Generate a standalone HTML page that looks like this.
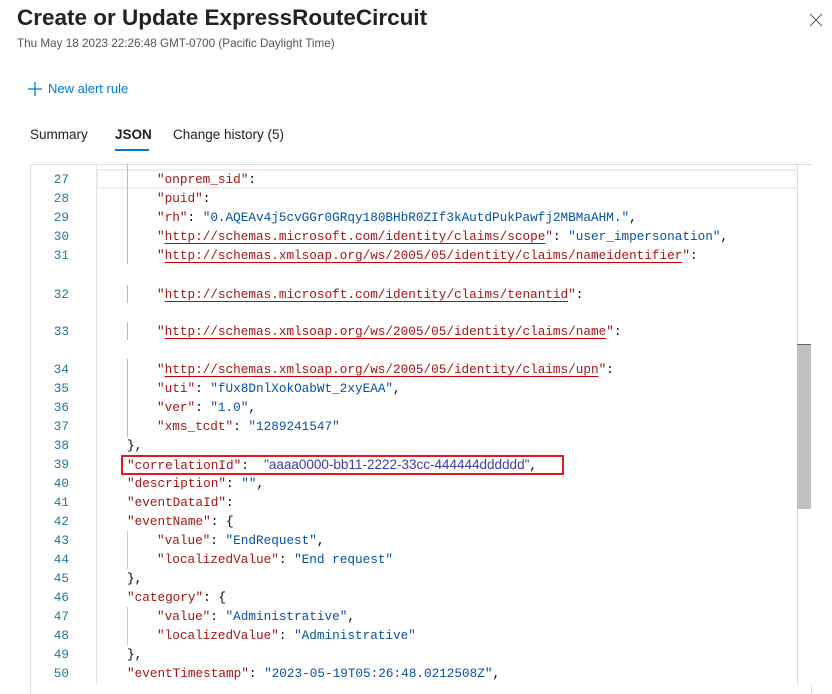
<!DOCTYPE html>
<html><head><style>
body{margin:0;width:832px;height:684px;background:#fff;position:relative;overflow:hidden;font-family:"Liberation Sans",sans-serif}
.a{position:absolute;white-space:pre}
.m{font-family:"Liberation Mono",monospace;font-size:12.7px;line-height:19px}
.ln{color:#237893;width:40px;text-align:right;left:29px}
.k{color:#a31515}.s{color:#0451a5}.p{color:#000}
.u{text-decoration:underline;text-decoration-color:#c00;text-underline-offset:3px}
.g{position:absolute;width:1px;background:#c8c8c8}
</style></head><body>
<div class="a" style="left:17px;top:5px;font-size:22.5px;color:#222;font-weight:600">Create or Update ExpressRouteCircuit</div>
<div class="a" style="left:17px;top:37px;font-size:11.7px;color:#555">Thu May 18 2023 22:26:48 GMT-0700 (Pacific Daylight Time)</div>
<svg class="a" style="left:808px;top:12px" width="16" height="16"><path d="M2 2L14 14M14 2L2 14" stroke="#555" stroke-width="1"/></svg>
<svg class="a" style="left:27px;top:81px" width="16" height="16"><path d="M8 1V15M1 8H15" stroke="#0078d4" stroke-width="1.3"/></svg>
<div class="a" style="left:48px;top:81px;font-size:13px;color:#0078d4">New alert rule</div>
<div class="a" style="left:30px;top:127px;font-size:13.5px;color:#222">Summary</div>
<div class="a" style="left:115px;top:127px;font-size:13.5px;color:#222;font-weight:600">JSON</div>
<div style="position:absolute;left:115px;top:149px;width:34px;height:2px;background:#0078d4"></div>
<div class="a" style="left:173px;top:127px;font-size:13.5px;color:#222">Change history (5)</div>

<div style="position:absolute;left:30px;top:164px;width:782px;height:530px;border:1px solid #ddd;border-bottom:none;box-sizing:border-box"></div>
<div style="position:absolute;left:96px;top:169px;width:715px;height:20px;border:2px solid #eee;box-sizing:border-box"></div>
<div class="g" style="left:96px;top:164px;height:520px;background:#e4e4e4"></div>
<div class="g" style="left:127px;top:164px;height:100px;background:#bbb"></div>
<div class="g" style="left:127px;top:285px;height:18px;background:#bbb"></div>
<div class="g" style="left:127px;top:322px;height:18px;background:#bbb"></div>
<div class="g" style="left:127px;top:359px;height:78px;background:#bbb"></div>
<div class="g" style="left:127px;top:531px;height:38px"></div>
<div class="g" style="left:127px;top:607px;height:38px"></div>
<div style="position:absolute;left:797px;top:165px;width:14px;height:520px;border-left:1px solid #ddd;background:#fff"></div>
<div style="position:absolute;left:797px;top:344px;width:14px;height:164px;background:#c1c1c1;border-top:1px solid #666"></div>

<div class="a m ln" style="top:170px">27</div><div class="a m" style="left:157px;top:170px"><span class="k">"onprem_sid"</span>:</div>
<div class="a m ln" style="top:189px">28</div><div class="a m" style="left:157px;top:189px"><span class="k">"puid"</span>:</div>
<div class="a m ln" style="top:208px">29</div><div class="a m" style="left:157px;top:208px"><span class="k">"rh"</span>: <span class="s">"0.AQEAv4j5cvGGr0GRqy180BHbR0ZIf3kAutdPukPawfj2MBMaAHM."</span>,</div>
<div class="a m ln" style="top:227px">30</div><div class="a m" style="left:157px;top:227px"><span class="k">"<span class="u">http://schemas.microsoft.com/identity/claims/scope</span>"</span>: <span class="s">"user_impersonation"</span>,</div>
<div class="a m ln" style="top:246px">31</div><div class="a m" style="left:157px;top:246px"><span class="k">"<span class="u">http://schemas.xmlsoap.org/ws/2005/05/identity/claims/nameidentifier</span>"</span>:</div>
<div class="a m ln" style="top:285px">32</div><div class="a m" style="left:157px;top:285px"><span class="k">"<span class="u">http://schemas.microsoft.com/identity/claims/tenantid</span>"</span>:</div>
<div class="a m ln" style="top:322px">33</div><div class="a m" style="left:157px;top:322px"><span class="k">"<span class="u">http://schemas.xmlsoap.org/ws/2005/05/identity/claims/name</span>"</span>:</div>
<div class="a m ln" style="top:360px">34</div><div class="a m" style="left:157px;top:360px"><span class="k">"<span class="u">http://schemas.xmlsoap.org/ws/2005/05/identity/claims/upn</span>"</span>:</div>
<div class="a m ln" style="top:379px">35</div><div class="a m" style="left:157px;top:379px"><span class="k">"uti"</span>: <span class="s">"fUx8DnlXokOabWt_2xyEAA"</span>,</div>
<div class="a m ln" style="top:398px">36</div><div class="a m" style="left:157px;top:398px"><span class="k">"ver"</span>: <span class="s">"1.0"</span>,</div>
<div class="a m ln" style="top:417px">37</div><div class="a m" style="left:157px;top:417px"><span class="k">"xms_tcdt"</span>: <span class="s">"1289241547"</span></div>
<div class="a m ln" style="top:436px">38</div><div class="a m" style="left:127px;top:436px">},</div>
<div class="a m ln" style="top:455px">39</div><div class="a m" style="left:127px;top:455px"><span class="k">"correlationId"</span>:  <span style="font-family:'Liberation Sans',sans-serif;font-size:13.5px;color:#3b3ba8">"aaaa0000-bb11-2222-33cc-444444dddddd"</span>,</div>
<div style="position:absolute;left:121px;top:455px;width:443px;height:20px;border:2px solid #e8171e;box-sizing:border-box"></div>
<div class="a m ln" style="top:474px">40</div><div class="a m" style="left:127px;top:474px"><span class="k">"description"</span>: <span class="s">""</span>,</div>
<div class="a m ln" style="top:493px">41</div><div class="a m" style="left:127px;top:493px"><span class="k">"eventDataId"</span>:</div>
<div class="a m ln" style="top:512px">42</div><div class="a m" style="left:127px;top:512px"><span class="k">"eventName"</span>: {</div>
<div class="a m ln" style="top:531px">43</div><div class="a m" style="left:157px;top:531px"><span class="k">"value"</span>: <span class="s">"EndRequest"</span>,</div>
<div class="a m ln" style="top:550px">44</div><div class="a m" style="left:157px;top:550px"><span class="k">"localizedValue"</span>: <span class="s">"End request"</span></div>
<div class="a m ln" style="top:569px">45</div><div class="a m" style="left:127px;top:569px">},</div>
<div class="a m ln" style="top:588px">46</div><div class="a m" style="left:127px;top:588px"><span class="k">"category"</span>: {</div>
<div class="a m ln" style="top:607px">47</div><div class="a m" style="left:157px;top:607px"><span class="k">"value"</span>: <span class="s">"Administrative"</span>,</div>
<div class="a m ln" style="top:626px">48</div><div class="a m" style="left:157px;top:626px"><span class="k">"localizedValue"</span>: <span class="s">"Administrative"</span></div>
<div class="a m ln" style="top:645px">49</div><div class="a m" style="left:127px;top:645px">},</div>
<div class="a m ln" style="top:664px">50</div><div class="a m" style="left:127px;top:664px"><span class="k">"eventTimestamp"</span>: <span class="s">"2023-05-19T05:26:48.0212508Z"</span>,</div>
</body></html>
